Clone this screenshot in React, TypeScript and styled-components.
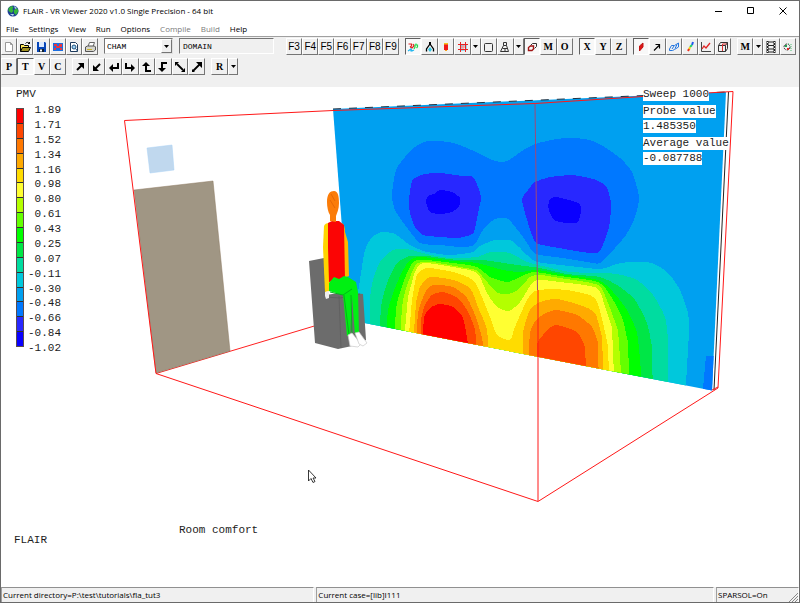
import React from 'react';
import styled, { createGlobalStyle, css } from 'styled-components';

const GlobalStyle = createGlobalStyle`
  *, *::before, *::after { box-sizing: border-box; }
  body { margin: 0; background: #fff; }
  button, input, select { font: inherit; color: inherit; border-radius: 0; }
`;

const UI_FONT = '"Open Sans", "Noto Sans", sans-serif';
const MONO_FONT = '"Liberation Mono", "DejaVu Sans Mono", monospace';

const Window = styled.div`
  display: flex;
  flex-direction: column;
  min-height: 100vh;
  border: 1px solid #6a6a6a;
  background: #f0f0f0;
  color: #000;
  font-family: ${UI_FONT};
  font-size: 8px;
`;

const TitleBar = styled.header`
  display: flex;
  align-items: center;
  height: 20px;
  padding-left: 6px;
  gap: 4px;
  background: #fff;
`;

const Title = styled.h1`
  flex: 1;
  margin: 0;
  font-size: 8px;
  font-weight: 400;
  line-height: 20px;
  white-space: nowrap;
`;

const WindowControls = styled.div`
  display: flex;
`;

const ControlButton = styled.button`
  display: grid;
  place-items: center;
  width: 32px;
  height: 20px;
  padding: 0;
  border: 0;
  background: transparent;
`;

const MenuBar = styled.nav`
  display: flex;
  height: 16px;
  background: #fff;
  border-bottom: 1px solid #a0a0a0;
`;

const MenuItem = styled.button`
  padding: 0 5px;
  border: 0;
  background: transparent;
  line-height: 15px;
  &:disabled { color: #7a7a7a; }
`;

const Toolbars = styled.div`
  display: flex;
  flex-direction: column;
  gap: 3px;
  height: 50px;
  padding-top: 1px;
`;

const ToolbarRow = styled.div`
  display: flex;
  gap: 6px;
  height: 17px;
`;

const ToolGroup = styled.div<{ $width: number; $apart?: boolean }>`
  display: flex;
  flex: 0 0 ${(p) => p.$width}px;
  margin-left: ${(p) => (p.$apart ? 6 : 0)}px;
`;

const raised = css`
  border: 1px solid;
  border-color: #fff #757575 #757575 #fff;
  background: #f0f0f0;
`;

const ToolButton = styled.button<{ $pressed?: boolean; $narrow?: boolean; $serif?: boolean }>`
  ${raised}
  flex: ${(p) => (p.$narrow ? '0 0 10px' : '1 1 16px')};
  display: grid;
  place-items: center;
  min-width: 0;
  padding: 0;
  overflow: hidden;
  font-family: ${(p) => (p.$serif ? '"Liberation Serif", serif' : '"Liberation Sans", sans-serif')};
  font-size: 10px;
  font-weight: ${(p) => (p.$serif ? 700 : 400)};
  line-height: 12px;
  ${(p) => p.$pressed && css`
    border-color: #606060 #fff #fff #606060;
    background: #f8f8f8;
  `}
`;

const Combo = styled.div`
  position: relative;
  flex: 0 0 69px;
  height: 16px;
  border: 1px solid;
  border-color: #757575 #e0e0e0 #e0e0e0 #757575;
  background: #fff;
`;

const ComboSelect = styled.select`
  appearance: none;
  width: 100%;
  height: 14px;
  padding: 0 14px 0 2px;
  border: 0;
  background: transparent;
  font-family: ${MONO_FONT};
  font-size: 8px;
`;

const ComboArrow = styled.span`
  ${raised}
  position: absolute;
  top: 0;
  right: 0;
  bottom: 0;
  width: 11px;
  display: grid;
  place-items: center;
  pointer-events: none;
`;

const ObjectField = styled.input`
  flex: 0 0 95px;
  min-width: 0;
  height: 16px;
  padding: 0 3px;
  border: 1px solid;
  border-color: #757575 #fff #fff #757575;
  background: #f0f0f0;
  font-family: ${MONO_FONT};
  font-size: 8px;
`;

const Viewport = styled.main`
  position: relative;
  flex: 1;
  min-height: 500px;
  background: #fff;
  color: #1c1c1c;
  font-family: ${MONO_FONT};
  font-size: 11px;
  line-height: 13px;
  overflow: hidden;
`;

const SceneSvg = styled.svg`
  position: absolute;
  inset: 0;
  width: 100%;
  height: 100%;
`;

const Legend = styled.section`
  position: absolute;
  top: 1px;
  left: 15px;
`;

const LegendTitle = styled.h2`
  margin: 0;
  font-size: 11px;
  font-weight: 400;
  line-height: 13px;
`;

const LegendBody = styled.div`
  display: flex;
  gap: 2px;
  padding-top: 2px;
`;

const ColorBar = styled.div`
  display: flex;
  flex-direction: column;
  width: 8px;
  height: 239px;
  margin-top: 5px;
  border: 1px solid #5c4c4c;
`;

const Swatch = styled.span<{ $color: string }>`
  flex: 1;
  background: ${(p) => p.$color};
  & + & { border-top: 1px solid #303030; }
`;

const Values = styled.ol`
  display: flex;
  flex-direction: column;
  justify-content: space-between;
  width: 35px;
  height: 252px;
  margin: 0;
  padding: 0;
  list-style: none;
  line-height: 14px;
  text-align: right;
`;

const Readout = styled.dl`
  position: absolute;
  top: 1px;
  left: 642px;
  display: flex;
  flex-direction: column;
  align-items: flex-start;
  gap: 4px;
  margin: 0;
`;

const ReadoutItem = styled.div`
  display: flex;
  flex-direction: column;
  align-items: flex-start;
  gap: 2px;
`;

const ReadoutLabel = styled.dt`
  background: #fff;
`;

const ReadoutValue = styled.dd`
  margin: 0;
  background: #fff;
`;

const Caption = styled.p<{ $left: number; $bottom: number }>`
  position: absolute;
  left: ${(p) => p.$left}px;
  bottom: ${(p) => p.$bottom}px;
  margin: 0;
`;

const Pointer = styled.svg`
  position: absolute;
  left: 306px;
  top: 382px;
  width: 10px;
  height: 15px;
`;

const StatusBar = styled.footer`
  display: flex;
  gap: 2px;
  height: 15px;
`;

const StatusCell = styled.div<{ $flex: string }>`
  position: relative;
  flex: ${(p) => p.$flex};
  min-width: 0;
  padding-left: 1px;
  border-top: 1px solid #909090;
  border-left: 1px solid #a0a0a0;
  border-right: 1px solid #fff;
  line-height: 14px;
  white-space: nowrap;
`;

const Grip = styled.svg`
  position: absolute;
  right: 0;
  bottom: 0;
  width: 10px;
  height: 10px;
`;

const Glyph = ({ children }: { children: React.ReactNode }) => (
  <svg width="12" height="12" viewBox="0 0 12 12" fill="none" stroke="#000" strokeWidth="1" aria-hidden="true">
    {children}
  </svg>
);

const DownTriangle = () => (
  <svg width="5" height="3" viewBox="0 0 5 3" aria-hidden="true"><path d="M0 0h5L2.5 3z" /></svg>
);

const icons: Record<string, React.ReactNode> = {
  new: <path d="M2.5 1.5h5l2 2v7h-7zM7.5 1.5v2h2" fill="#fff" stroke="#999" />,
  open: (
    <>
      <path d="M1.5 10.5v-7h3l1 1h4v2" fill="#ffe95c" />
      <path d="M1.5 10.5l2-4h8l-2 4z" fill="#a09020" />
      <path d="M6.5 2.5c1-1.5 2.500-1.500 4 0v-1.500M10.500 2.500h-1.500" />
    </>
  ),
  save: (
    <>
      <path d="M2 1h8l1 1v9H2z" fill="#0645b8" stroke="none" />
      <path d="M4 1h5v5H4z" fill="#dbe9ff" stroke="none" />
      <path d="M4 8h5v3H4z" fill="#102030" stroke="none" />
      <path d="M5 8.500h2v2H5z" fill="#fff" stroke="none" />
    </>
  ),
  image: (
    <>
      <path d="M1 2h10v8H1z" fill="#1b6ee0" stroke="none" />
      <path d="M2 3h3v2H2zM7 3h3v3H8V5H7zM2 7h2v2H2zM8 7h2v2H8z" fill="#e93540" stroke="none" />
      <path d="M4 5h4v2H4z" fill="#f03040" stroke="none" />
    </>
  ),
  preview: (
    <>
      <path d="M2.500 1.500h5l2 2v7h-7z" fill="#fff" stroke="#1d3a5c" />
      <circle cx="6" cy="6" r="2" fill="#9fd2f4" stroke="#20507c" />
      <path d="M7.500 7.500l2 2.500" stroke="#20507c" />
    </>
  ),
  print: (
    <>
      <path d="M4 5.500l1.500-4h5l-1.500 4" fill="#fff" stroke="#666" />
      <path d="M1.500 6l2-1h7l1 1v3l-2 1.500h-8z" fill="#d4d4cc" stroke="#555" />
      <path d="M3 8.500h5" stroke="#c7b22c" />
    </>
  ),
  fields: (
    <>
      <path d="M1.500 3h3v2l-1.500 1M3 6l2 1 2-2-1-2" stroke="#e32222" strokeWidth="1.200" />
      <path d="M7 8l1-2V4h2.500v2M9 4V2.500M10.500 6l-1 1" stroke="#23d84a" strokeWidth="1.200" />
      <path d="M1 10l3-2 1 2 2-1M4 8v2.500" stroke="#22b6ee" strokeWidth="1.200" />
    </>
  ),
  compass: (
    <>
      <path d="M6 1v3" strokeWidth="2" />
      <path d="M6 3L2.500 8v2.500M6 3l3.500 5v2.500" strokeWidth="1.300" />
      <path d="M6 6l2 2.500L6 11 4 8.500z" fill="#35c8e6" stroke="none" />
    </>
  ),
  probe: (
    <>
      <path d="M4 2h4v7H4z" fill="#f01818" stroke="none" />
      <path d="M4 2h4v1.500H4z" fill="#f5c21b" stroke="none" />
      <path d="M5 9h2v1H5z" fill="#f5a01b" stroke="none" />
    </>
  ),
  mesh: (
    <>
      <path d="M4 4h5v5H4z" stroke="#43bfe6" />
      <path d="M3.500 1v10M8.500 1v10M1 3.500h10M1 8.500h10" stroke="#e82222" />
      <path d="M6 4v4M4 6h4" stroke="#f08080" />
    </>
  ),
  frame: <rect x="1.500" y="2.500" width="8" height="8" rx="1" stroke="#333" />,
  perspective: <path d="M4.500 1.500h3v3l2 6h-8l3-6zM4.500 4.500h3M3.500 7.500h5M6 7.500v3" stroke="#333" />,
  domain: (
    <>
      <path d="M4.500 4.500l2-2h4v3l-2 2" stroke="#333" />
      <path d="M2.500 6.500l2-1.500h3v3l-1.500 1.500H2.500z" stroke="#a01515" strokeWidth="1.400" />
    </>
  ),
  slice: <path d="M4.500 5l3.500-3v4L4.500 10z" fill="#dc1818" stroke="#c01414" />,
  vector: <path d="M3 9.500l5-5M4.500 3.500h4v4" strokeWidth="1.200" />,
  contour: <path d="M1.500 8l2-3.500h3L10.500 2v4l-4 2.500-2 1-3 0zM4 8l2-3M7 7.500l2-4" stroke="#2376e0" />,
  isosurface: (
    <>
      <path d="M9 1l-1 3" stroke="#2257ef" strokeWidth="2" />
      <path d="M8 4l-2 2" stroke="#20d070" strokeWidth="2" />
      <path d="M6 6l-1 3" stroke="#f5d11c" strokeWidth="2" />
      <path d="M5 8l-1 2" stroke="#ef2d1d" strokeWidth="2" />
    </>
  ),
  plot: (
    <>
      <path d="M1.500 1v9.500H11" stroke="#444" />
      <path d="M2 8l2-3 2 2 4-5" stroke="#e22626" strokeWidth="1.300" />
    </>
  ),
  box: (
    <>
      <path d="M1.500 4.500h7v6h-7zM1.500 4.500l2-3h7l-2 3M10.500 1.500v6l-2 3" stroke="#333" />
      <path d="M5.500 10v-7h4" stroke="#dc3030" />
    </>
  ),
  film: (
    <>
      <path d="M2.500 0v12M9.500 0v12" strokeWidth="2" stroke="#222" />
      <path d="M3 1h6M3 4.500h6M3 8h6M3 11h6" stroke="#222" />
      <path d="M2.500 1v10M9.500 1v10" stroke="#eee" strokeDasharray="1 2" />
    </>
  ),
  particles: (
    <>
      <circle cx="5" cy="6" r="3" stroke="#333" strokeDasharray="2 1" />
      <path d="M3 4h2v2H3z" fill="#20a050" stroke="none" />
      <path d="M5 7h2v2H5z" fill="#e02828" stroke="none" />
      <path d="M9 3v7M6 3h2" stroke="#48c070" strokeDasharray="1 1" />
    </>
  ),
  ne: <><path d="M3 9l4.500-4.500" strokeWidth="2" /><path d="M4 2h6v6z" fill="#000" stroke="none" /></>,
  sw: <><path d="M9 3L4.500 7.500" strokeWidth="2" /><path d="M2 4v6h6z" fill="#000" stroke="none" /></>,
  enter: <><path d="M10 2v5H4" strokeWidth="2" /><path d="M1 7l4-4v8z" fill="#000" stroke="none" /></>,
  branch: <><path d="M2 2v5h6" strokeWidth="2" /><path d="M11 7L7 3v8z" fill="#000" stroke="none" /></>,
  up: <><path d="M5 4v6h5" strokeWidth="2" /><path d="M5 1l4 4H1z" fill="#000" stroke="none" /></>,
  down: <><path d="M10 2H5v6" strokeWidth="2" /><path d="M5 11l4-4H1z" fill="#000" stroke="none" /></>,
  diagDown: (
    <><path d="M3 3l6 6" strokeWidth="1.800" /><path d="M1 1h4L1 5zM11 11H7l4-4z" fill="#000" stroke="none" /></>
  ),
  diagUp: (
    <><path d="M2 10l7-7" strokeWidth="1.800" /><path d="M11 1H5l6 6zM1 11h3L1 8z" fill="#000" stroke="none" /></>
  ),
};

type Tool = { label: string; icon?: string; text?: string; pressed?: boolean; menu?: boolean; sans?: boolean };

const t = (text: string, pressed = false): Tool => ({ label: text, text, pressed });
const i = (icon: string, label: string, pressed = false): Tool => ({ icon, label, pressed });
const menu = (label: string): Tool => ({ label, menu: true });

const fileTools = [
  i('new', 'New'), i('open', 'Open'), i('save', 'Save'),
  i('image', 'Save image'), i('preview', 'Preview'), i('print', 'Print'),
];
const functionTools: Tool[] = ['F3', 'F4', 'F5', 'F6', 'F7', 'F8', 'F9'].map((k) => ({ label: k, text: k, sans: true }));
const viewTools = [
  i('fields', 'Object affects', true), i('compass', 'Axes'), i('probe', 'Probe'), i('mesh', 'Mesh'),
  menu('Mesh options'), i('frame', 'Wireframe'), i('perspective', 'Perspective'), menu('Perspective options'),
  i('domain', 'Domain', true), t('M'), t('O'),
];
const axisTools = [t('X', true), t('Y'), t('Z')];
const plotTools = [
  i('slice', 'Slice', true), i('vector', 'Vectors'), i('contour', 'Contours'),
  i('isosurface', 'Iso-surface'), i('plot', 'Graph'), i('box', 'Plot limits'),
];
const macroTools = [t('M'), menu('Macro options'), i('film', 'Animation'), i('particles', 'Streamlines')];
const variableTools = [t('P'), t('T', true), t('V'), t('C')];
const moveTools = [
  i('ne', 'Move in'), i('sw', 'Move out'), i('enter', 'Turn left'), i('branch', 'Turn right'),
  i('up', 'Tilt up'), i('down', 'Tilt down'), i('diagDown', 'Zoom out'), i('diagUp', 'Zoom in'),
];
const resetTools = [t('R'), menu('Reset options')];

const Tools = ({ items, width, apart }: { items: Tool[]; width: number; apart?: boolean }) => (
  <ToolGroup $width={width} $apart={apart}>
    {items.map((tool) => (
      <ToolButton
        key={tool.label}
        type="button"
        aria-label={tool.label}
        aria-pressed={tool.pressed}
        $pressed={tool.pressed}
        $narrow={tool.menu}
        $serif={!tool.sans}
      >
        {tool.menu ? <DownTriangle /> : tool.icon ? <Glyph>{icons[tool.icon]}</Glyph> : tool.text}
      </ToolButton>
    ))}
  </ToolGroup>
);

const scale = [
  '#ff0000', '#ff4600', '#ff7800', '#ffaa00', '#ffdc00', '#ffff32', '#b4ff00', '#64ff00',
  '#00ff00', '#00e646', '#00dca0', '#00c8dc', '#00a0f0', '#0078ff', '#2828ff', '#0a00ff',
];

const values = [
  '1.89', '1.71', '1.52', '1.34', '1.16', '0.98', '0.80', '0.61', '0.43',
  '0.25', '0.07', '-0.11', '-0.30', '-0.48', '-0.66', '-0.84', '-1.02',
];

/* Contour bands on the slice plane: level index in the colour scale, then outline. */
const bands: [number, string][] = [
  [13, '392,195 396,170 405,157 415,147 427,141 440,141 453,143 467,148 480,154 495,161 507,161 522,151 535,144 557,139 573,138 590,140 603,146 620,158 632,172 639,197 635,217 626,235 615,248 600,263 587,262 563,258 540,255 533,252 523,237 508,219 495,219 483,230 474,245 460,247 440,245 420,243 405,225 395,210'],
  [14, '409,200 412,181 417,177 425,174 440,173 463,176 473,177 478,187 481,198 478,213 474,232 467,236 457,238 440,237 423,235 415,227 410,213'],
  [14, '522,200 528,190 535,182 550,177 560,176 573,175 593,179 602,183 607,188 611,203 609,227 599,252 583,252 553,247 543,245 535,242 528,223'],
  [15, '426,202 428,196 434,194 440,190 452,192 460,198 459,206 452,212 440,214 430,212'],
  [15, '549,201 556,197 578,203 581,210 577,223 556,221 549,211'],
  [11, '357,335 358,293 361,273 365,250 372,237 382,232 395,234 410,245 427,252 450,255 473,252 480,246 495,240 512,241 527,255 537,262 570,266 600,269 617,264 630,262 652,263 668,273 680,290 688,313 689,333 685,400'],
  [10, '371,340 370,300 373,280 380,262 393,250 407,249 427,254 450,258 477,257 490,252 510,253 527,262 547,267 570,272 597,273 617,274 637,280 653,295 665,317 668,340 668,400'],
  [9, '380,340 381,307 387,283 397,263 410,256 427,256 457,260 483,260 517,265 540,268 567,274 600,277 620,287 635,300 647,323 652,347 653,400'],
  [8, '387,340 388,310 397,283 408,262 420,257 453,261 477,263 503,270 520,272 537,270 560,274 598,280 613,292 627,310 637,333 641,373 641,400'],
  [7, '394,340 397,303 407,273 417,260 453,263 477,267 490,277 507,282 518,278 533,272 560,276 598,282 610,295 622,317 628,343 630,400'],
  [6, '400,340 403,300 412,272 418,263 433,262 477,270 488,283 498,293 508,294 518,290 530,277 540,275 560,278 598,285 608,303 618,330 623,400'],
  [5, '404,340 408,297 415,272 423,263 453,267 477,273 487,293 497,307 509,311 520,302 532,283 540,280 560,282 597,288 605,307 612,327 615,400'],
  [4, '408,345 412,300 417,275 427,268 453,272 473,280 482,297 490,317 497,335 510,340 515,327 527,300 535,291 553,289 573,291 595,298 603,323 608,347 610,400'],
  [3, '413,345 416,303 420,287 430,277 453,280 470,288 478,307 487,330 488,360'],
  [3, '523,370 523,333 530,310 540,302 557,299 580,305 595,313 602,337 604,390'],
  [2, '417,345 418,313 425,293 433,285 453,287 467,298 477,320 483,343 484,360'],
  [2, '529,370 530,333 538,318 555,310 577,315 592,327 598,343 599,390'],
  [1, '421,345 421,320 425,305 432,295 443,292 458,298 468,312 475,330 477,360'],
  [1, '537,370 537,345 543,335 555,325 577,332 585,347 587,390'],
  [0, '423,345 424,318 430,308 440,304 453,307 463,318 468,345 468,360'],
];

type Point = number[];

const distance = (a: Point, b: Point) => Math.hypot(a[0] - b[0], a[1] - b[1]);

/* Direction of the curve at a point; none next to a long straight side, which stays straight. */
const tangent = (before: Point, point: Point, after: Point) =>
  distance(before, point) > 42 || distance(point, after) > 42
    ? [0, 0]
    : [(after[0] - before[0]) / 9, (after[1] - before[1]) / 9];

/* Turns an outline into a closed, lightly rounded curve through all of its points. */
const smooth = (outline: string) => {
  const p = outline.split(' ').map((pair) => pair.split(',').map(Number));
  const at = (n: number) => p[(n + p.length) % p.length];
  const segments = p.map((a, n) => {
    const b = at(n + 1);
    const leave = tangent(at(n - 1), a, b);
    const arrive = tangent(a, b, at(n + 2));
    return `C${a[0] + leave[0]} ${a[1] + leave[1]} ${b[0] - arrive[0]} ${b[1] - arrive[1]} ${b[0]} ${b[1]}`;
  });
  return `M${p[0]}${segments.join('')}z`;
};

const Scene = () => (
  <SceneSvg viewBox="1 87 798 500" preserveAspectRatio="xMinYMin meet" role="img" aria-label="Comfort contours in a room">
    <defs>
      <clipPath id="wall"><path d="M333 109L726 92 712 390.500 349 320z" /></clipPath>
    </defs>
    <path d="M156 373.500L316 325.500" fill="none" stroke="#ff2020" />
    <path d="M147 148l25-3 2 25-24 3z" fill="#c0d8ee" stroke="#a8d0f4" strokeWidth="0.500" />
    <g clipPath="url(#wall)" shapeRendering="crispEdges">
      <path d="M320 80h420v320H320z" fill={scale[12]} />
      {bands.map(([level, outline]) => (
        <path key={outline} d={smooth(outline)} fill={scale[level]} />
      ))}
      <path d="M702 400l4-44h10v44z" fill={scale[13]} />
    </g>
    <path d="M333 109L726 92" stroke="#203040" strokeDasharray="8 8" />
    <path d="M728.500 92L714 390" stroke="#222" fill="none" />
    <path d="M134 190l79-9 17 170-74 22z" fill="#a09684" stroke="#8c7860" strokeWidth="0.500" />
    <g fill="none" stroke="#ff1818">
      <path d="M535 103.500L333 110.500 124.500 120.500 156 373.500 538 501.500 718 388 733 91.500 643 96.500z" />
      <path d="M538 501V290" />
      <path d="M535 103.500L537.500 290" stroke="#a04878" />
      <path d="M712 390l6-3" />
    </g>
    <path d="M309 261l15-3 2 37 19-3 18 2 3 46-14 6-14 3-23-6z" fill="#6c6c6c" />
    <path d="M339 296l2 52M325 297l15 1 20-4" stroke="#5c5c5c" fill="none" strokeWidth="0.700" />
    <path d="M324 226q1-3 5-3l1 68-5 1-2-45z" fill="#ffd400" />
    <path d="M342 223q3 2 3 9l3 10 1 34-5 2z" fill="#ffb800" />
    <path d="M328 223l4-2h7l5 4 1 54-16 3-1-35z" fill="#fb0505" />
    <path d="M327 202c0-8 3-11 7-11 4 0 5 5 5 12 0 6-2 10-3 13v6l-6-1v-6c-2-3-3-8-3-13z" fill="#fb7c08" />
    <path d="M331 194l4 7M330 200l5 8" stroke="#e76705" fill="none" />
    <path d="M325 292l4-1v7l-3 1-1-3z" fill="#eee" />
    <path d="M329 283l5-6 5 2 5-3 4 1 8 5 2 10 1 42-4 1-3-38-2 38-3 1-4-41-14-4z" fill="#00f012" />
    <path d="M330 292l13 3 9-6M344 295l5 40M351 295l1 41" stroke="#00b818" fill="none" />
    <path d="M348 335l4-2 9 11-3 3-8-1z" fill="#fff" stroke="#c8c8c8" strokeWidth="0.700" />
    <path d="M355 333l4-1 8 11-4 3-4-2z" fill="#fff" stroke="#c8c8c8" strokeWidth="0.700" />
  </SceneSvg>
);

export default function App() {
  return (
    <Window>
      <GlobalStyle />
      <TitleBar>
        <svg width="12" height="12" viewBox="0 0 12 12" aria-hidden="true">
          <circle cx="6" cy="6" r="5.500" fill="#1d3f94" />
          <path d="M1.500 3l3-2 2 1-1 2 1 2-2 2-3-2zM7 5l3-2 1.500 3L9 10 7 8z" fill="#35b53c" />
          <path d="M7 1l3 2-2 1zM3 9l4 0-1 2z" fill="#b8dce8" />
        </svg>
        <Title>FLAIR - VR Viewer 2020 v1.0 Single Precision - 64 bit</Title>
        <WindowControls>
          <ControlButton type="button" aria-label="Minimize">
            <svg width="8" height="8" viewBox="0 0 8 8"><path d="M0 4.500h7" stroke="#000" /></svg>
          </ControlButton>
          <ControlButton type="button" aria-label="Maximize">
            <svg width="8" height="8" viewBox="0 0 8 8"><path d="M.5.5h6v6h-6z" stroke="#000" fill="none" /></svg>
          </ControlButton>
          <ControlButton type="button" aria-label="Close">
            <svg width="8" height="8" viewBox="0 0 8 8"><path d="M.5.5l7 7M7.500.5l-7 7" stroke="#000" /></svg>
          </ControlButton>
        </WindowControls>
      </TitleBar>
      <MenuBar aria-label="Main menu">
        {['File', 'Settings', 'View', 'Run', 'Options', 'Compile', 'Build', 'Help'].map((name) => (
          <MenuItem key={name} type="button" disabled={name === 'Compile' || name === 'Build'}>{name}</MenuItem>
        ))}
      </MenuBar>
      <Toolbars>
        <ToolbarRow>
          <Tools items={fileTools} width={97} />
          <Combo>
            <ComboSelect aria-label="Library" defaultValue="CHAM"><option>CHAM</option></ComboSelect>
            <ComboArrow><DownTriangle /></ComboArrow>
          </Combo>
          <ObjectField aria-label="Object name" defaultValue="DOMAIN" />
          <Tools items={functionTools} width={113} apart />
          <Tools items={viewTools} width={168} />
          <Tools items={axisTools} width={48} />
          <Tools items={plotTools} width={98} />
          <Tools items={macroTools} width={59} />
        </ToolbarRow>
        <ToolbarRow>
          <Tools items={variableTools} width={65} />
          <Tools items={moveTools} width={133} />
          <Tools items={resetTools} width={27} />
        </ToolbarRow>
      </Toolbars>
      <Viewport>
        <Scene />
        <Legend>
          <LegendTitle>PMV</LegendTitle>
          <LegendBody>
            <ColorBar>{scale.map((color) => <Swatch key={color} $color={color} />)}</ColorBar>
            <Values>{values.map((value) => <li key={value}>{value}</li>)}</Values>
          </LegendBody>
        </Legend>
        <Readout>
          <ReadoutItem><ReadoutLabel>Sweep 1000</ReadoutLabel></ReadoutItem>
          <ReadoutItem><ReadoutLabel>Probe value</ReadoutLabel><ReadoutValue>1.485350</ReadoutValue></ReadoutItem>
          <ReadoutItem><ReadoutLabel>Average value</ReadoutLabel><ReadoutValue>-0.087788</ReadoutValue></ReadoutItem>
        </Readout>
        <Caption $left={178} $bottom={50}>Room comfort</Caption>
        <Caption $left={13} $bottom={40}>FLAIR</Caption>
        <Pointer viewBox="0 0 10 15" aria-hidden="true">
          <path d="M1.500 1v11l2.500-2.500 2 4 2-1-2-3.500h3z" fill="#fff" stroke="#222" strokeWidth="0.900" />
        </Pointer>
      </Viewport>
      <StatusBar>
        <StatusCell $flex="313 1 0">Current directory=P:\test\tutorials\fla_tut3</StatusCell>
        <StatusCell $flex="398 1 0">Current case=[lib]I111</StatusCell>
        <StatusCell $flex="0 0 83px">
          SPARSOL=On
          <Grip viewBox="0 0 10 10" aria-hidden="true">
            <path d="M1 10l9-9M4 10l6-6M7 10l3-3" stroke="#888" />
          </Grip>
        </StatusCell>
      </StatusBar>
    </Window>
  );
}
